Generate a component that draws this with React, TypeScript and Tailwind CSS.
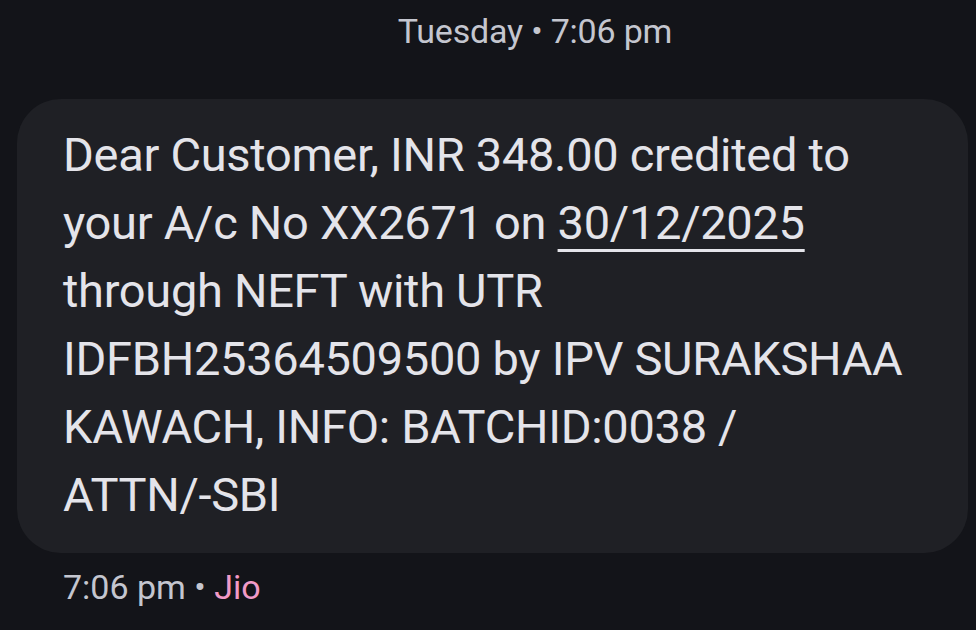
export default function App() {
  return (
    <div className="h-[630px] w-[976px] overflow-hidden bg-[#131419] font-['Roboto',sans-serif]">
      <div className="flex h-[99px] justify-center pl-[94px] pt-[11px]">
        <p className="text-[34px] leading-[40px] tracking-[-0.2px] text-[#c4c6cf]">
          Tuesday • 7:06 pm
        </p>
      </div>
      <div className="ml-[17px] mr-[8px] rounded-[44px] bg-[#1f2025] px-[46px] pb-[24px] pt-[22px]">
        <p className="text-[47px] leading-[68px] tracking-[-0.3px] text-[#e4e4ea]">
          Dear Customer, INR 348.00 credited to
          <br />
          your A/c No XX2671 on{' '}
          <span className="underline decoration-[3px] underline-offset-[10px]">30/12/2025</span>
          <br />
          through NEFT with UTR
          <br />
          IDFBH25364509500 by IPV SURAKSHAA
          <br />
          KAWACH, INFO: BATCHID:0038 /
          <br />
          ATTN/-SBI
        </p>
      </div>
      <div className="px-[63px] pt-[14px]">
        <p className="text-[34px] leading-[40px] text-[#c4c6cf]">
          7:06 pm • <span className="text-[#f19ac7]">Jio</span>
        </p>
      </div>
    </div>
  )
}
